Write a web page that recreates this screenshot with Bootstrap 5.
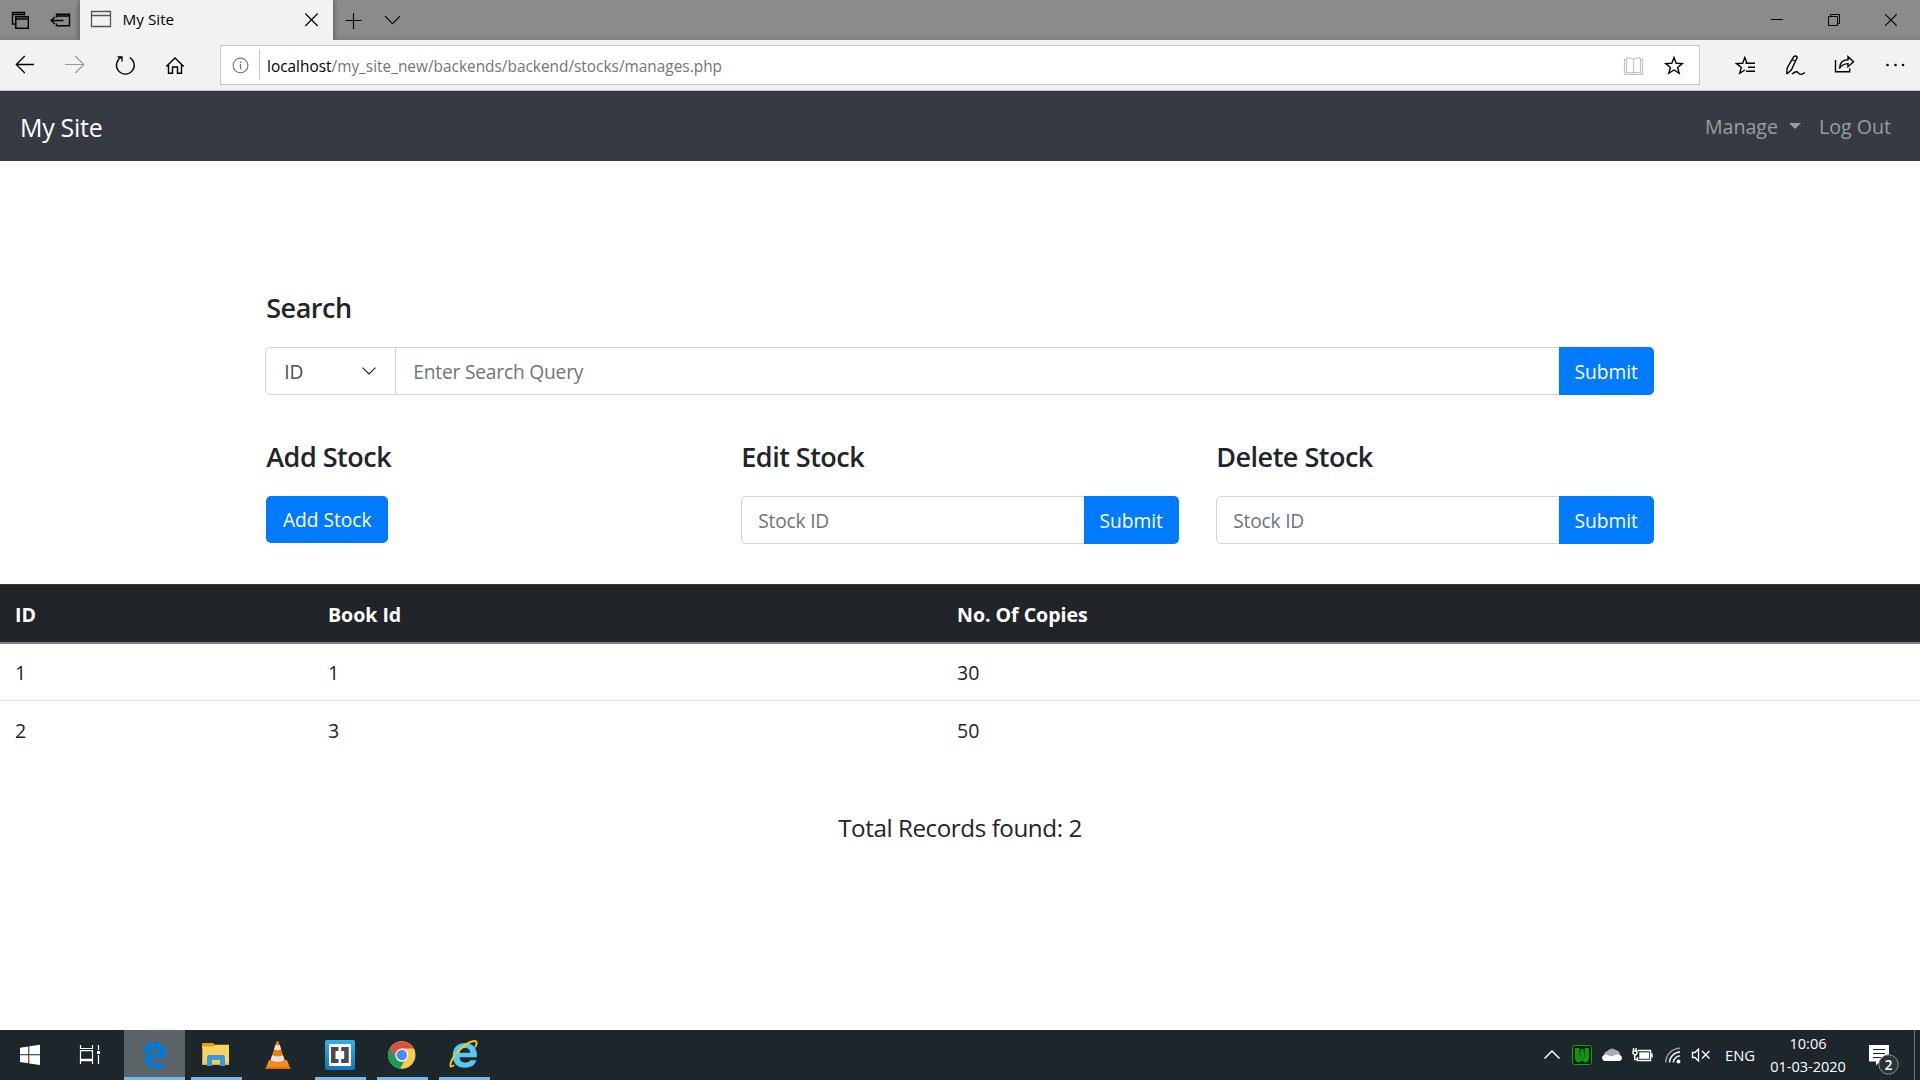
<!DOCTYPE html>
<html lang="en">
<head>
<meta charset="utf-8">
<meta name="viewport" content="width=device-width, initial-scale=1">
<title>My Site</title>
<link href="https://cdn.jsdelivr.net/npm/bootstrap@5.3.0/dist/css/bootstrap.min.css" rel="stylesheet">
<style>
  body { font-family: "Open Sans", "Noto Sans", sans-serif; font-size: 19.6px; line-height: 30px; color: #212529; background: #fff; }
  svg { display: block; flex: none; }
  .desk { height: 1080px; overflow: hidden; }

  /* browser window */
  .tabstrip { height: 40px; background: linear-gradient(#8b8b8b 0 34px, #7f7f7f); color: #000; }
  .tab-active { width: 253px; height: 40px; background: #f2f2f2; font-size: 15.3px; box-shadow: 0 0 6px rgba(0,0,0,.45); clip-path: inset(0 -6px 0 -6px); }
  .tab-active span { padding-left: 10.500px; line-height: 38px; }
  .toolbar { height: 51px; background: #f2f2f2; border-bottom: 1px solid #c6c6c6; }
  .address { width: 1480px; height: 40px; margin-top: 5px; background: #fff; border: 1px solid #c8c8c8; font-size: 15.4px; line-height: 42px; color: #757575; }
  .address b { font-weight: 400; color: #000; }
  .line { fill: none; stroke: #000; stroke-width: 1.15; }

  /* page */
  .site-nav { height: 70px; background: #363a42; padding: 0 20px; }
  .site-nav .navbar-brand { font-size: 25px; letter-spacing: -.3px; margin: 0; padding: 1px 0 0; color: #fff; }
  .site-nav .nav-link { padding: 2px 10px 0; color: #9a9da1; font-size: 19.6px; }
  .site-nav .navbar-nav { margin-right: 1px; }
  .site-nav .dropdown-toggle::after { margin-left: 11px; margin-right: 2px; border-width: 6px 6px 0; vertical-align: 5px; }
  .page { width: 1425px; padding: 129px 18.75px 0; }
  .page .row { --bs-gutter-x: 37.5px; }
  .page h4 { font-size: 27px; font-weight: 600; line-height: 36px; letter-spacing: -.5px; margin: 0 0 21px; }
  .page .form-control, .page .form-select { height: 48px; font-size: 19.2px; letter-spacing: -.2px; padding: 1px 16px 0; border-color: #ced4da; border-radius: 5px; color: #495057; }
  .page .form-control::placeholder { color: #6c757d; }
  .page .form-select { flex: 0 0 131px; margin-left: -1px; padding-top: 2px; padding-left: 18px; background-size: 14px 8px; background-position: 96px 19px;
    --bs-form-select-bg-img: url("data:image/svg+xml,%3csvg xmlns='http://www.w3.org/2000/svg' viewBox='0 0 14 8'%3e%3cpath fill='none' stroke='%23222' stroke-width='1.1' d='M.5.6 7 7 13.500.6'/%3e%3c/svg%3e"); }
  .page .input-group .form-select { border-radius: 5px; }
  .page .input-group .form-select + .form-control { border-radius: 0; margin-left: 0; padding-left: 17px; }
  .page .btn { background: #007bff; border: 0; border-radius: 5px; height: 48px; font-size: 19.2px; letter-spacing: -.03px; padding: 2px 0 0; }
  .page .input-group .btn { width: 95px; }
  .page .add-btn { width: 122px; height: 47px; }
  .second { padding-top: 44px; }
  .stock-table { margin: 40px 0 0; --bs-table-color: #212529; border-collapse: separate; border-spacing: 0; }
  .stock-table th, .stock-table td { padding: 2px 15px 0; vertical-align: middle; border: 0; }
  .stock-table thead th { height: 60px; background: #212529; color: #fff; letter-spacing: -.05px; box-shadow: none; border-top: 1px solid #32383e; border-bottom: 2px solid #7c8186; }
  .stock-table tbody td { height: 57px; border-bottom: 1px solid #dee2e6; }
  .stock-table tbody tr:last-child td { border-bottom: 0; }
  .total { margin: 51px 0 0; font-size: 24.2px; line-height: 37px; letter-spacing: -.43px; }

  /* taskbar */
  .taskbar { height: 50px; background: #1d262b; color: #fff; }
  .task { width: 62px; height: 50px; }
  .task.open::after { content: ""; display: block; width: 51px; height: 3px; margin: -3px 0 0 5px; background: #76b9ed; }
  .task.current { background: linear-gradient(90deg, #5c6468 61px, transparent 61px); }
  .task.current::after { width: 61px; margin-left: 0; }
  .lang { width: 44px; padding-left: 5px; font-size: 14.8px; line-height: 51px; }
  .clock { width: 88px; font-size: 14.5px; line-height: 23px; padding-top: 2px; margin-right: 2px; }
</style>
</head>
<body>
<div class="desk d-flex flex-column">

  <div class="tabstrip d-flex flex-shrink-0">
    <svg width="80" height="40" viewBox="0 0 80 40" class="line">
      <path stroke-width="1.4" d="M15.500 24H12.500V12.500H24.500V15.500M12 14.500H24.500M15.800 16.800H28.300V28.200H15.800ZM15.800 19H28.300"/>
      <path stroke-width="1.4" d="M56.500 17.500V14.300H69.500V25.800H56.500V23.500M56.500 16H69.500M63.500 20.500H51.500M54.800 17 51.200 20.500 54.800 24"/>
    </svg>
    <div class="tab-active d-flex">
      <svg width="32" height="40" viewBox="80 0 32 40"><path d="M91.500 11.500H110.500V26.500H91.500ZM91.500 15.500H110.500" fill="none" stroke="#555" stroke-width="1.3"/></svg>
      <span>My Site</span>
      <svg class="ms-auto line" width="38" height="40" viewBox="295 0 38 40"><path d="M305.300 13.500 317.700 26M317.700 13.500 305.300 26"/></svg>
    </div>
    <svg class="line" width="87" height="40" viewBox="333 0 87 40"><path d="M345.500 20.500H361.500M353.500 13V29M385 16.200 392.500 23.700 400 16.200"/></svg>
    <svg class="ms-auto" width="170" height="40" viewBox="1750 0 170 40" fill="none" stroke="#000"><path d="M1771 19.500H1783M1828.500 16.500H1837.500V25.500H1828.500ZM1830.500 16.500V14.500H1839.500V23.500H1837.500"/><path stroke-width="1.2" d="M1885.300 14.300 1896.700 25.700M1896.700 14.300 1885.300 25.700"/></svg>
  </div>

  <div class="toolbar d-flex flex-shrink-0">
    <svg class="line" width="220" height="50" viewBox="0 40 220 50">
      <path stroke-width="1.3" d="M34 64.500H16.500M24.800 56 16.300 64.500 24.800 73"/>
      <path stroke="#999" d="M65 64.500H83.500M75.200 56 83.700 64.500 75.200 73"/>
      <path stroke-width="1.3" d="M121 57.500A8.900 8.900 0 1 0 129.700 57.500M117.600 57H122V61.500"/>
      <path stroke-width="1.4" d="M166.300 66.500 175 58 183.700 66.500M168.500 65V73.300H172.500V67H177.500V73.300H181.500V65"/>
    </svg>
    <div class="address d-flex">
      <svg width="46" height="38" viewBox="221 46 46 38" fill="none" stroke="#777"><circle cx="240.500" cy="65.500" r="7.400" stroke-width="1.100"/><path stroke-width="1.300" d="M240.500 64V69.500M240.500 61.500V63"/><path stroke="#c8c8c8" d="M259.500 50V80"/></svg>
      <span><b>localhost</b>/my_site_new/backends/backend/stocks/manages.php</span>
      <svg class="ms-auto line" width="84" height="38" viewBox="1615 46 84 38">
        <path stroke="#c2c2c2" stroke-width="1.200" d="M1626.500 59.500H1624.500V74.300H1642.500V59.500H1640.500M1633.500 59.500Q1630 57 1626.500 58.500V72.500H1633.500ZM1633.500 59.500Q1637 57 1640.500 58.500V72.500H1633.500V74"/>
        <path stroke-width="1.400" d="M1674 57.500 1676.200 63.200 1682.300 63.500 1677.600 67.400 1679.200 73.300 1674 70 1668.800 73.300 1670.400 67.400 1665.700 63.500 1671.800 63.200Z"/>
      </svg>
    </div>
    <svg class="line" width="220" height="50" viewBox="1700 40 220 50">
      <path stroke-width="1.400" d="M1748 63.200H1747L1744.800 57.500 1742.700 63.200 1736.500 63.500 1741.300 67.400 1739.700 73.300 1745 70M1745.500 63.200H1755M1748 67.200H1755M1746 71.200H1755"/>
      <path stroke-width="1.400" d="M1786.700 74 1787.200 68 1793.500 57Q1796 54.800 1797.300 57.300L1791.300 70 1786.700 74M1792 59.500 1795.800 61.500M1792 74Q1797 70 1798.500 73T1805 72.500"/>
      <path stroke-width="1.400" d="M1835.500 60V71.800H1849.700V68.500M1839.500 68.500Q1839.800 60 1848 59.800V56.700L1853.500 61.700 1848 66.700V63.600Q1842 63.800 1839.500 68.500Z"/>
      <g fill="#000" stroke="none"><circle cx="1887.500" cy="65" r="1.300"/><circle cx="1895.500" cy="65" r="1.300"/><circle cx="1903" cy="65" r="1.300"/></g>
    </svg>
  </div>

  <nav class="site-nav navbar navbar-expand navbar-dark flex-shrink-0">
    <a class="navbar-brand" href="#">My Site</a>
    <ul class="navbar-nav ms-auto">
      <li class="nav-item dropdown"><a class="nav-link dropdown-toggle" href="#" data-bs-toggle="dropdown">Manage</a></li>
      <li class="nav-item"><a class="nav-link" href="#">Log Out</a></li>
    </ul>
  </nav>

  <main class="flex-grow-1">
    <div class="page mx-auto">
      <form>
        <h4>Search</h4>
        <div class="input-group flex-nowrap">
          <select class="form-select"><option>ID</option><option>Book Id</option></select>
          <input class="form-control" placeholder="Enter Search Query">
          <button class="btn btn-primary" type="button">Submit</button>
        </div>
      </form>
      <div class="row second">
        <div class="col-4">
          <h4>Add Stock</h4>
          <button class="btn btn-primary add-btn" type="button">Add Stock</button>
        </div>
        <div class="col-4">
          <h4>Edit Stock</h4>
          <div class="input-group"><input class="form-control" placeholder="Stock ID"><button class="btn btn-primary" type="button">Submit</button></div>
        </div>
        <div class="col-4">
          <h4>Delete Stock</h4>
          <div class="input-group"><input class="form-control" placeholder="Stock ID"><button class="btn btn-primary" type="button">Submit</button></div>
        </div>
      </div>
    </div>
    <table class="table stock-table">
      <colgroup><col style="width:313px"><col style="width:629px"><col></colgroup>
      <thead><tr><th>ID</th><th>Book Id</th><th>No. Of Copies</th></tr></thead>
      <tbody>
        <tr><td>1</td><td>1</td><td>30</td></tr>
        <tr><td>2</td><td>3</td><td>50</td></tr>
      </tbody>
    </table>
    <p class="total text-center">Total Records found: 2</p>
  </main>

  <div class="taskbar d-flex flex-shrink-0">
    <svg width="124" height="50" viewBox="0 1030 124 50">
      <path fill="#fff" d="M20 1047.700 28.300 1046.500V1054.300H20ZM29.300 1046.300 40 1044.800V1054.300H29.300ZM20 1055.300H28.300V1063.300L20 1062.100ZM29.300 1055.300H40V1065L29.300 1063.500Z"/>
      <path fill="none" stroke="#fff" stroke-width="1.200" d="M80.500 1045V1048.500H92.500V1045M80.500 1050.700H92.500V1059.300H80.500ZM80.500 1064V1060.700H92.500V1064M98.500 1045V1050M98.500 1055V1064"/>
      <path fill="#fff" d="M97 1051H100V1054H97Z"/>
    </svg>
    <div class="task open current"><svg width="62" height="50" viewBox="124 1030 62 50"><path fill="#0078d7" d="M141.800 1053.300C143 1046 148 1042 154.200 1042 161.500 1042 166 1047.500 166 1054V1057.800H150C150.500 1062 154 1063.700 157.500 1063.700 160 1063.700 162.300 1063 164 1061.900V1066.800C161.500 1068 158.800 1068.400 156 1068.400 149 1068.400 144.800 1064.300 144.800 1058.500 144.800 1054.700 147 1051.300 151 1049.600 148 1049.500 144.500 1050.500 141.800 1053.300ZM150 1053.700H159.400C159.400 1050.500 157.500 1048.900 154.900 1048.900 152.400 1048.900 150.400 1050.800 150 1053.700Z"/></svg></div>
    <div class="task open"><svg width="62" height="50" viewBox="186 1030 62 50"><path fill="#e3a008" d="M202.500 1043H213L215.500 1045V1048H202V1043.500Z"/><path fill="#fcd462" d="M202.300 1046.500H213L215.500 1044.800H229V1064.500H202.300Z"/><path fill="#f5c343" d="M202.300 1062H229V1064.800H202.300Z"/><path fill="#3c98df" d="M207 1066V1057Q207 1055 209 1055H223Q225 1055 225 1057V1066H220V1060H212V1066Z"/></svg></div>
    <div class="task"><svg width="62" height="50" viewBox="248 1030 62 50"><path fill="#f28a1a" d="M269 1060H287L290.500 1069H265.500Z"/><path fill="#d96a00" d="M265.800 1067.500H290.200V1069H265.800Z"/><path fill="#ef7d0c" d="M276.500 1041.500Q277.500 1040.500 278.500 1041.500L284.600 1060Q278 1064 270.600 1060Z"/><path fill="#e4e4e4" d="M275.400 1045H279.800L281.200 1049.500Q277.600 1051 273.900 1049.500ZM272.100 1055.300Q277.500 1057.500 283 1055.300L284.500 1060Q277.700 1064 270.600 1060Z"/></svg></div>
    <div class="task open"><svg width="62" height="50" viewBox="310 1030 62 50"><defs><linearGradient id="brk" x1="0" x2="0" y1="0" y2="1"><stop stop-color="#32b0e8"/><stop offset="1" stop-color="#1177be"/></linearGradient></defs><rect x="325" y="1040" width="30" height="30" rx="2" fill="url(#brk)"/><rect x="329" y="1044" width="22" height="22" rx="1" fill="#fff"/><path fill="#4a4a4a" d="M331 1047H338.500V1051H335.500V1059H338.500V1063H331ZM348.700 1047H341.200V1051H344.200V1059H341.200V1063H348.700Z"/></svg></div>
    <div class="task open"><svg width="62" height="50" viewBox="372 1030 62 50"><circle cx="401.800" cy="1055" r="13.700" fill="#fccd4d"/><path fill="#db4f43" d="M389.900 1048.200A13.700 13.700 0 0 1 413.700 1048.400H401.800L395.700 1058.300Z"/><path fill="#169c5a" d="M389.900 1048.200 396 1058.400A6.800 6.800 0 0 0 404 1061.400L400.200 1068.600A13.700 13.700 0 0 1 389.900 1048.200Z"/><circle cx="401.800" cy="1055" r="6.500" fill="#f4f4f4"/><circle cx="401.800" cy="1055" r="5.200" fill="#4c8bf5"/></svg></div>
    <div class="task open"><svg width="62" height="50" viewBox="434 1030 62 50"><path fill="#57c8f3" d="M477 1057.300H459.500Q460 1062.700 465.500 1062.700 469 1062.700 470.500 1060.300H476.500Q474 1067.800 465 1067.800 453 1067.500 452.700 1055.500 453 1043.500 465 1043 477.300 1043.500 477 1057.300ZM459.600 1052.700H470.300Q470 1048 465 1048 460.300 1048 459.600 1052.700Z"/><path fill="none" stroke="#f4c623" stroke-width="2" stroke-linecap="round" d="M453.500 1065.500Q449 1068.500 450.800 1062.500C454 1053 468 1041 474.500 1041 477.500 1041 476.800 1044.500 475.500 1046.500"/></svg></div>

    <svg class="ms-auto" width="200" height="50" viewBox="1520 1030 200 50" fill="none" stroke="#fff">
      <path stroke-width="1.500" d="M1544.500 1058.500 1552 1051 1559.500 1058.500"/>
      <rect x="1572.500" y="1045.500" width="19" height="19" rx="2" fill="#101b10" stroke="#13a013"/>
      <path fill="#11960f" stroke="none" d="M1575 1048H1579.500L1580 1058 1580.800 1049H1583.600L1584.300 1058 1584.800 1048H1589V1058Q1588.800 1062.500 1584.700 1062.500L1582 1060.500 1579.600 1062.500Q1575.400 1062.500 1575 1058Z"/>
      <g stroke="none"><path fill="#a9adb0" d="M1604 1057A5 5 0 0 1 1607.500 1051Q1611 1046.500 1616 1050Q1620 1051 1620 1055L1609 1060Z"/><path fill="#fff" d="M1604 1061Q1601.500 1059.500 1602 1057 1603.500 1054 1606.500 1054.500L1611 1056.500 1616.500 1054.500Q1621.500 1054 1622 1058 1621.800 1060.700 1619 1061Z"/></g>
      <path stroke-width="1.400" d="M1638 1050.500H1650.500V1060.500H1637.500V1057M1652 1053.500V1057.500M1633.500 1048V1050.500M1636 1048V1050.500M1632.500 1051H1637V1053.500L1635.500 1055 1633 1053.500V1051M1634.700 1055V1059.500H1637.500"/><path fill="#fff" stroke="none" d="M1639.300 1052.300H1649V1058.800H1639.300Z"/>
      <g stroke-width="1.400"><path stroke="#9a9fa2" d="M1665.700 1062.500A14.500 14.500 0 0 1 1680 1048.200"/><path d="M1669.500 1062.500A10.700 10.700 0 0 1 1680 1052M1673.300 1062.500A7 7 0 0 1 1680 1055.900"/><circle cx="1678.500" cy="1061.500" r="1.300" fill="#fff"/></g>
      <path stroke-width="1.300" d="M1692.500 1052.500H1695L1698.500 1049V1061L1695 1057.500H1692.500ZM1702 1051 1709.500 1058.500M1709.500 1051 1702 1058.500"/>
    </svg>
    <div class="lang">ENG</div>
    <div class="clock text-center"><div>10:06</div><div>01-03-2020</div></div>
    <svg width="66" height="50" viewBox="1854 1030 66 50">
      <path fill="#fff" d="M1869 1045H1889V1061.500H1880L1876 1065.500V1061.500H1869Z"/>
      <path stroke="#1d262b" d="M1873 1049.500H1885M1873 1053.500H1885M1873 1057.500H1881"/>
      <circle cx="1888.500" cy="1064.500" r="9.700" fill="#2b3439" stroke="#8b9093"/>
      <text x="1888.500" y="1069.500" fill="#fff" font-size="14" font-weight="600" text-anchor="middle">2</text>
      <path stroke="#6c7275" d="M1914.500 1030V1080"/>
    </svg>
  </div>
</div>
<script src="https://cdn.jsdelivr.net/npm/bootstrap@5.3.0/dist/js/bootstrap.bundle.min.js"></script>
</body>
</html>
